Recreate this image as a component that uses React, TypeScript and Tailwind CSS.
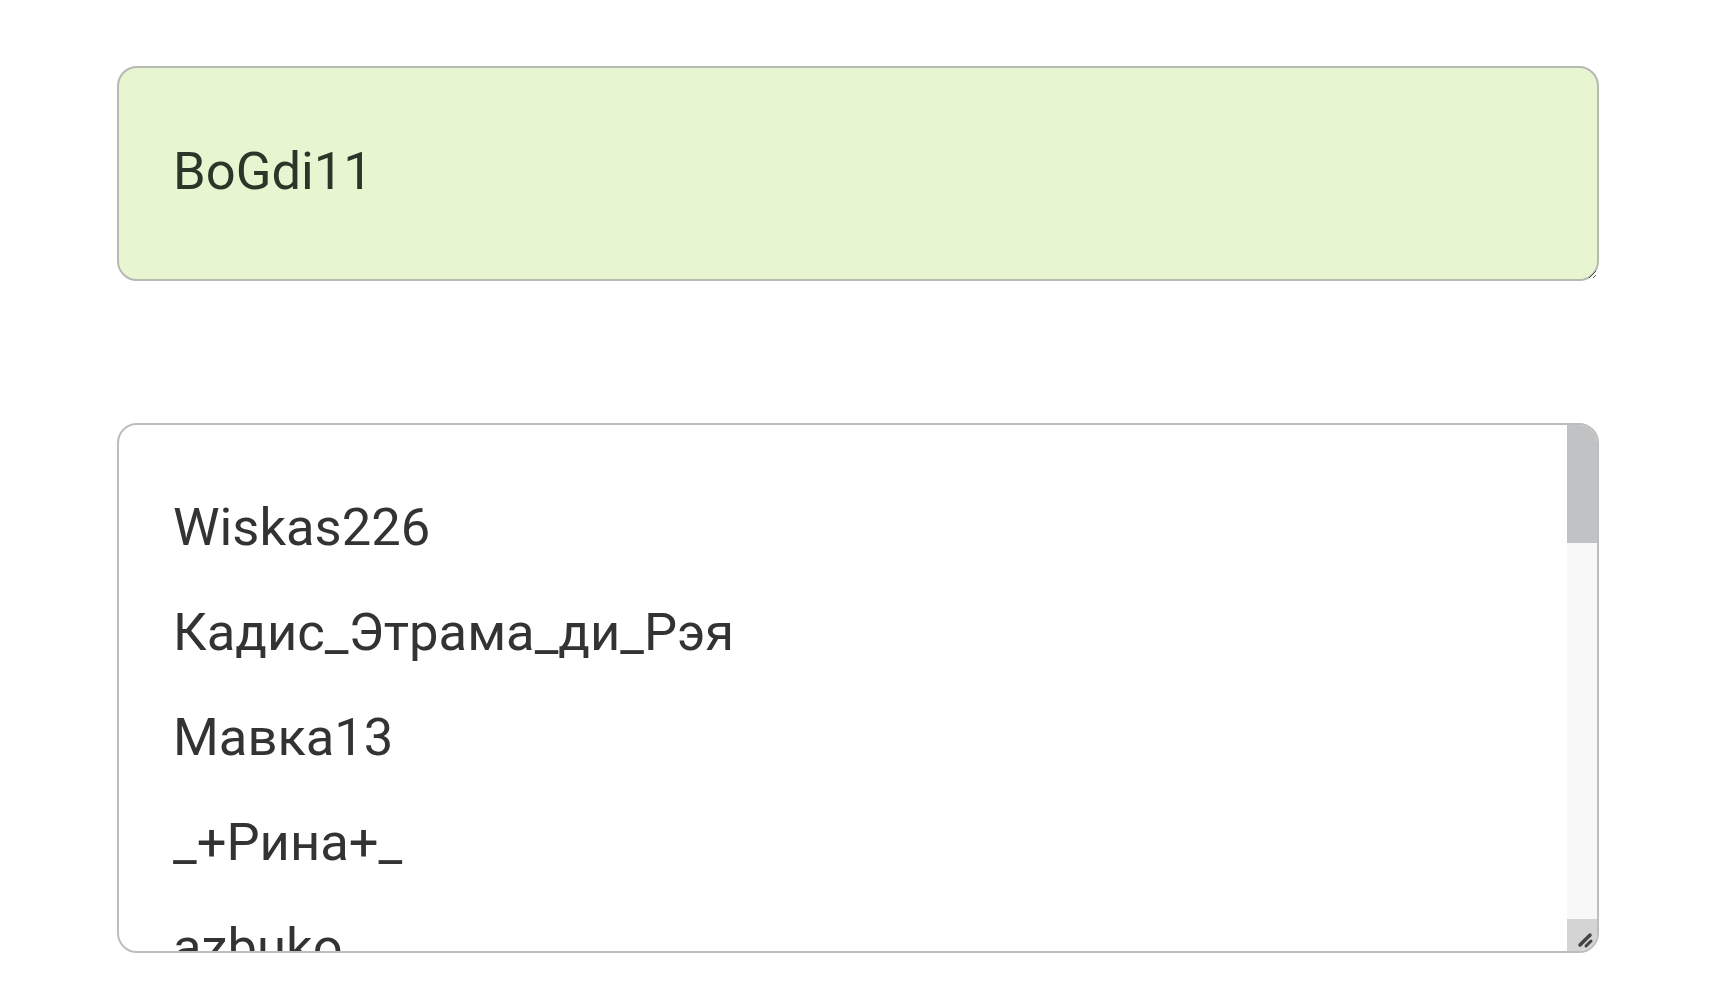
const nicknames = [
  "Wiskas226",
  "Кадис_Этрама_ди_Рэя",
  "Мавка13",
  "_+Рина+_",
  "azbuko",
];

export default function App() {
  return (
    <div className="min-h-screen bg-white font-['Roboto','Noto_Sans',sans-serif]">
      <div className="flex flex-col gap-[142px] px-[117px] pt-[66px]">
        {/* Current nickname */}
        <textarea
          readOnly
          value="BoGdi11"
          className="block h-[215px] w-full rounded-[20px] border-2 border-[#b6b9b2] bg-[#e7f6d1] pt-[51px] pl-[54px] pr-[54px] text-[52.5px] leading-[105px] text-[#2b3528] outline-none"
        />

        {/* Nickname list */}
        <div className="flex h-[530px] w-full overflow-hidden rounded-[20px] border-2 border-[#bdbdbd] bg-white">
          <div className="min-w-0 flex-1 overflow-hidden pt-[50px] pl-[54px] text-[52.5px] leading-[105px] text-[#333333]">
            {nicknames.map((name) => (
              <div key={name} className="whitespace-nowrap">
                {name}
              </div>
            ))}
          </div>

          {/* Scrollbar */}
          <div className="flex w-[30px] shrink-0 flex-col">
            <div className="h-[118px] bg-[#c1c2c4]" />
            <div className="flex-1 bg-[#f8f8f8]" />
            <div className="flex h-[32px] items-end justify-end bg-[#d4d4d4] p-[2px]">
              <svg width="20" height="20" viewBox="0 0 20 20">
                <path d="M5 16 L15 6" stroke="#444" strokeWidth="3.5" strokeLinecap="round" />
                <path d="M11 17 L16 12" stroke="#444" strokeWidth="3" strokeLinecap="round" />
              </svg>
            </div>
          </div>
        </div>
      </div>
    </div>
  );
}
